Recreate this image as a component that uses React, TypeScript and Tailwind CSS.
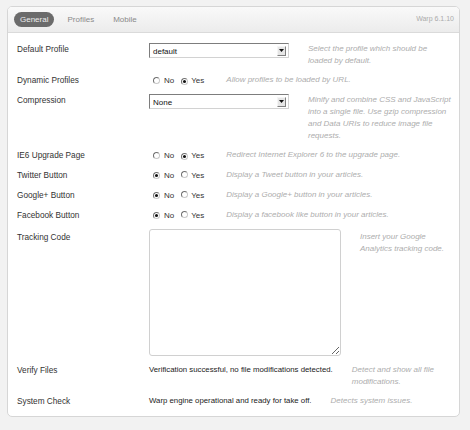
import type { ReactNode } from 'react'

// ── Small form primitives (old-school Warp admin look) ───────────────────
function Radio({ checked }: { checked?: boolean }) {
  return (
    <span className="relative inline-flex items-center justify-center w-[7px] h-[7px] rounded-full bg-white border border-t-[#6f6f6f] border-l-[#6f6f6f] border-r-[#c9c9c9] border-b-[#c9c9c9]">
      {checked && <span className="w-[3px] h-[3px] rounded-full bg-[#111]" />}
    </span>
  )
}

function YesNo({ yes }: { yes?: boolean }) {
  return (
    <div className="flex items-center h-[13px] pl-[4px] pr-[3px] text-[8px] text-[#333]">
      <Radio checked={!yes} />
      <span className="ml-[4px]">No</span>
      <span className="ml-[7px]">
        <Radio checked={yes} />
      </span>
      <span className="ml-[3px]">Yes</span>
    </div>
  )
}

function Select({ value }: { value: string }) {
  return (
    <div className="w-[140px] h-[15px] flex items-center justify-between pl-[3px] pr-[2px] bg-white border border-t-[#7d7d7d] border-l-[#7d7d7d] border-r-[#d2d2d2] border-b-[#d2d2d2] text-[8px] text-[#111]">
      <span className="pt-[2px]">{value}</span>
      <span className="w-[9px] h-[10px] flex items-center justify-center bg-[#e6e6e6] border border-t-[#f5f5f5] border-l-[#f5f5f5] border-r-[#808080] border-b-[#808080]">
        <svg width="5" height="3" viewBox="0 0 5 3">
          <path d="M0 0 H5 L2.5 3 Z" fill="#111" />
        </svg>
      </span>
    </div>
  )
}

function Row({ label, desc, children, pad, className = '' }: { label: string; desc: ReactNode; children: ReactNode; pad?: boolean; className?: string }) {
  return (
    <div className={`flex items-start ${className}`}>
      <div className={`w-[132px] shrink-0 text-[8.25px] leading-[12px] text-[#333] ${pad ? 'pt-[3px]' : 'pt-[1px]'}`}>{label}</div>
      <div className="shrink-0">{children}</div>
      <div className={`ml-[19px] flex-1 italic text-[8px] leading-[12px] text-[#adadad] ${pad ? 'pt-[2px]' : ''}`}>{desc}</div>
    </div>
  )
}

const StatusText = ({ children }: { children: ReactNode }) => (
  <div className="text-[7.8px] leading-[12px] text-[#222] whitespace-nowrap">{children}</div>
)

export default function App() {
  return (
    <div className="min-h-screen bg-[#f2f2f2] pt-[6px] pl-[7px] font-['Liberation_Sans',Arial,sans-serif]">
      <div className="w-[453px] bg-white border border-[#d6d6d6] rounded-[5px] overflow-hidden">
        {/* Tabs */}
        <div className="h-[26px] flex items-center justify-between pl-[6px] pr-[5px] bg-gradient-to-b from-[#f9f9f9] to-[#ececec] border-b border-[#dadada]">
          <div className="flex items-center gap-[7px] text-[8px]">
            <span className="h-[15px] px-[6px] flex items-center rounded-full bg-[#6b6b6b] text-[#eeeeee]">General</span>
            <span className="px-[6px] text-[#8a8a8a]">Profiles</span>
            <span className="px-[6px] text-[#8a8a8a]">Mobile</span>
          </div>
          <span className="text-[7px] text-[#ababab]">Warp 6.1.10</span>
        </div>

        {/* Settings */}
        <div className="flex flex-col gap-[7px] px-[9px] pt-[10px] pb-[8px]">
          <Row label="Default Profile" desc="Select the profile which should be loaded by default.">
            <Select value="default" />
          </Row>
          <Row label="Dynamic Profiles" desc="Allow profiles to be loaded by URL.">
            <YesNo yes />
          </Row>
          <Row
            label="Compression"
            desc={
              <div className="whitespace-nowrap">
                Minify and combine CSS and JavaScript
                <br />
                into a single file. Use gzip compression
                <br />
                and Data URIs to reduce image file
                <br />
                requests.
              </div>
            }
          >
            <Select value="None" />
          </Row>
          <Row label="IE6 Upgrade Page" desc="Redirect Internet Explorer 6 to the upgrade page.">
            <YesNo yes />
          </Row>
          <Row label="Twitter Button" desc="Display a Tweet button in your articles.">
            <YesNo />
          </Row>
          <Row label="Google+ Button" desc="Display a Google+ button in your articles.">
            <YesNo />
          </Row>
          <Row label="Facebook Button" desc="Display a facebook like button in your articles.">
            <YesNo />
          </Row>
          <Row label="Tracking Code" desc="Insert your Google Analytics tracking code." pad>
            <textarea className="block w-[192px] h-[127px] border border-[#d0d0d0] rounded-[3px] bg-white" />
          </Row>
          <Row label="Verify Files" desc="Detect and show all file modifications." className="mt-[1px]">
            <StatusText>Verification successful, no file modifications detected.</StatusText>
          </Row>
          <Row label="System Check" desc="Detects system issues.">
            <StatusText>Warp engine operational and ready for take off.</StatusText>
          </Row>
        </div>
      </div>
    </div>
  )
}
